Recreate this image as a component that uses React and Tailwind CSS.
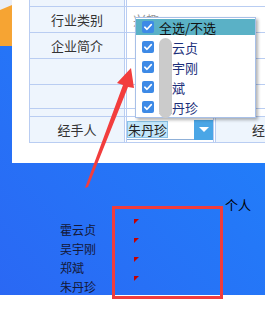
import React from "react";

const font = { fontFamily: '"Noto Sans CJK SC", "Noto Sans", sans-serif' };

function Check() {
  return (
    <div className="w-[12px] h-[12px] rounded-[2px] bg-[#3d8ae6] flex items-center justify-center shrink-0">
      <svg width="10" height="10" viewBox="0 0 10 10">
        <path d="M1.8 5.2 L4 7.3 L8.3 2.6" fill="none" stroke="#fff" strokeWidth="1.6" strokeLinecap="round" strokeLinejoin="round" />
      </svg>
    </div>
  );
}

function Row({ h, label, children }) {
  return (
    <div className={`flex ${h} border-b border-[#b9cdf2]`}>
      <div className="w-[96px] border-x border-[#b9cdf2] bg-[#eef5fd] flex items-center justify-center text-[13px] text-[#333] leading-none">
        {label}
      </div>
      {children ? children : <div className="flex-1 ml-[1px] border-l border-[#b9cdf2] bg-white" />}
    </div>
  );
}

export default function App() {
  const names = ["霍云贞", "吴宇刚", "郑斌", "朱丹珍"];
  return (
    <div className="relative w-[265px] h-[318px] overflow-hidden bg-white" style={font}>
      <div className="h-[295px] flex flex-col bg-linear-to-tr from-[#2a68f4] to-[#1e84fb]">
        <div className="flex h-[163px]">
          <div className="w-[21px] flex flex-col">
            <div className="h-[46px] bg-[#e9eef8]">
              <div className="h-full bg-[#f6a433] [clip-path:polygon(0_10px,100%_5px,100%_100%,0_100%)]" />
            </div>
          </div>
          <div className="flex-1 bg-white pl-[17px]">
            <div className="flex flex-col">
              <Row h="h-[7px]" label="" />
              <Row h="h-[26px]" label="行业类别">
                <div className="flex-1 ml-[1px] border-l border-[#b9cdf2] bg-white pl-[6px] flex items-center text-[13px] text-[#999]">
                  兴趣
                </div>
              </Row>
              <Row h="h-[26px]" label="企业简介" />
              <Row h="h-[26px]" label="" />
              <Row h="h-[24px]" label="" />
              <Row h="h-[8px]" label="" />
              <Row h="h-[26px]" label="经手人">
                <div className="w-[88px] ml-[1px] border-l border-r border-[#b9cdf2] bg-white flex items-center">
                  <div className="w-[68px] h-[20px] border-b border-[#8fb0d8] flex items-center">
                    <div className="w-[41px] h-[17px] bg-[#c2e6fa] border border-[#8cc4e8] text-[13px] text-[#222] leading-[15px] flex items-center whitespace-nowrap overflow-hidden">
                      朱丹珍
                    </div>
                  </div>
                  <div className="w-[19px] h-[20px] bg-[#4aa6e6] flex items-center justify-center">
                    <div className="w-0 h-0 border-x-[5px] border-x-transparent border-t-[5px] border-t-white" />
                  </div>
                </div>
                <div className="flex-1 ml-[1px] border-l border-[#b9cdf2] bg-[#eef5fd] pl-[36px] flex items-center text-[13px] text-[#333] whitespace-nowrap overflow-hidden">
                  经
                </div>
              </Row>
            </div>
          </div>
        </div>
        <div className="flex-1 flex flex-col">
          <div className="mt-[34px] pl-[225px] h-[16px] leading-[16px] text-[13px] text-black">个人</div>
          <div className="mt-[6px] flex flex-col pl-[60px]">
            {names.map((n) => (
              <div key={n} className="flex h-[19px]">
                <div className="w-[74px] text-[12px] leading-[19px] pt-[1px] text-[#141838]">{n}</div>
                <div className="w-[5px] h-[5px] bg-[#c40000] [clip-path:polygon(0_0,100%_0,0_100%)]" />
              </div>
            ))}
          </div>
        </div>
      </div>

      {/* dropdown overlay */}
      <div className="absolute left-[135px] top-[17px] w-[121px] h-[101px] bg-white border border-[#a8c0e8] shadow-[2px_2px_3px_rgba(0,0,0,0.3)] pt-[1px]">
        <div className="h-[16px] bg-[#5ab1c6] flex items-center pl-[6px] gap-[5px] text-[13px] text-[#111] leading-none">
          <Check />
          <span>全选/不选</span>
        </div>
        <div className="mt-[2px] flex flex-col">
          {names.map((n) => (
            <div key={n} className="h-[20px] flex items-center pl-[6px] gap-[5px] text-[13px] text-[#1c2f7a] leading-none">
              <Check />
              <span>{n}</span>
            </div>
          ))}
        </div>
        <div className="absolute left-[23px] top-[20px] w-[13px] h-[80px] rounded-full bg-[#cbcbcb] blur-[0.6px]" />
      </div>

      {/* red annotation box */}
      <div className="absolute left-[112px] top-[206px] w-[111px] h-[93px] border-[3px] border-[#f03c3c]" />

      {/* red arrow */}
      <svg className="absolute left-0 top-0" width="265" height="318" viewBox="0 0 265 318">
        <polygon points="131,68 117,83 123,85 85,188 88,187 128,87 134,88" fill="#f23d3d" />
      </svg>
    </div>
  );
}
